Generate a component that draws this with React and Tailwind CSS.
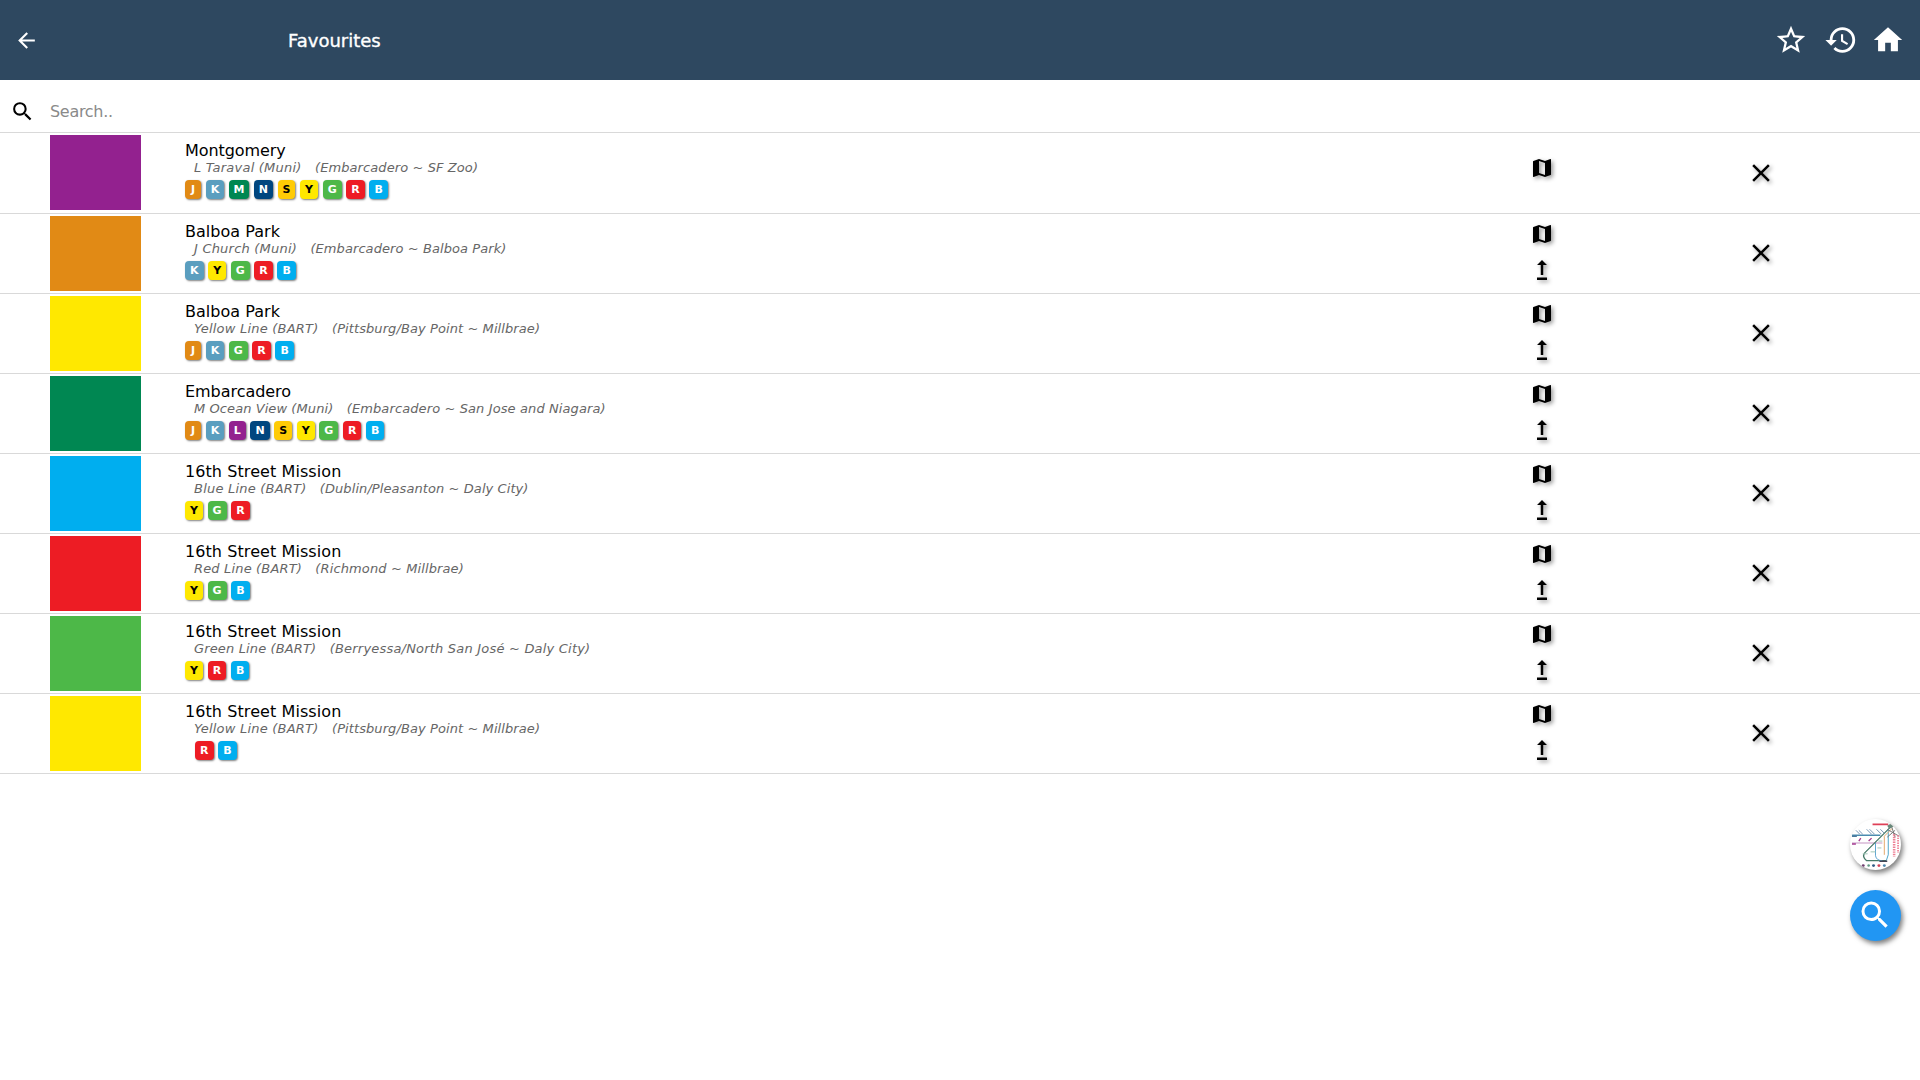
import React from "react";
import { MdArrowBack, MdSearch, MdStarBorder, MdHistory, MdHome, MdMap, MdUpgrade, MdClose } from "react-icons/md";

const BADGES = {
  J: "w-[16.1px] bg-[#e18a15] text-white",
  K: "w-[18.5px] bg-[#5a9ebf] text-white",
  L: "w-[17px] bg-[#93218f] text-white",
  M: "w-[20.4px] bg-[#008752] text-white",
  N: "w-[19.3px] bg-[#00467f] text-white",
  S: "w-[17.8px] bg-[#ffcb05] text-black",
  Y: "w-[18.1px] bg-[#ffe800] text-black",
  G: "w-[18.9px] bg-[#4db848] text-white",
  R: "w-[18.6px] bg-[#ed1c24] text-white",
  B: "w-[18.4px] bg-[#00aeef] text-white",
};

const MISSION = "tracking-[0.08px]";
const BALBOA = "tracking-[0.03px]";

const ROWS = [
  { name: "Montgomery", nameCls: "tracking-[-0.08px]", line: "L Taraval (Muni)", lineCls: "tracking-[0.22px]", route: "(Embarcadero ~ SF Zoo)", routeCls: "tracking-[0.09px]", badges: "JKMNSYGRB", color: "bg-[#93218f]", first: true },
  { name: "Balboa Park", nameCls: BALBOA, line: "J Church (Muni)", lineCls: "tracking-[0.21px]", route: "(Embarcadero ~ Balboa Park)", routeCls: "tracking-[0.08px]", badges: "KYGRB", color: "bg-[#e18a15]" },
  { name: "Balboa Park", nameCls: BALBOA, line: "Yellow Line (BART)", lineCls: "tracking-[0.22px]", route: "(Pittsburg/Bay Point ~ Millbrae)", routeCls: "tracking-[0.09px]", badges: "JKGRB", color: "bg-[#ffe800]" },
  { name: "Embarcadero", nameCls: "tracking-[-0.05px]", line: "M Ocean View (Muni)", lineCls: "tracking-[0.08px]", route: "(Embarcadero ~ San Jose and Niagara)", routeCls: "tracking-[0.11px]", badges: "JKLNSYGRB", color: "bg-[#008752]" },
  { name: "16th Street Mission", nameCls: MISSION, line: "Blue Line (BART)", lineCls: "tracking-[0.21px]", route: "(Dublin/Pleasanton ~ Daly City)", routeCls: "tracking-[0.08px]", badges: "YGR", color: "bg-[#00aeef]" },
  { name: "16th Street Mission", nameCls: MISSION, line: "Red Line (BART)", lineCls: "tracking-[0.16px]", route: "(Richmond ~ Millbrae)", routeCls: "tracking-[0.12px]", badges: "YGB", color: "bg-[#ed1c24]" },
  { name: "16th Street Mission", nameCls: MISSION, line: "Green Line (BART)", lineCls: "tracking-[0.14px]", route: "(Berryessa/North San José ~ Daly City)", routeCls: "tracking-[0.2px]", badges: "YRB", color: "bg-[#4db848]" },
  { name: "16th Street Mission", nameCls: MISSION, line: "Yellow Line (BART)", lineCls: "tracking-[0.22px]", route: "(Pittsburg/Bay Point ~ Millbrae)", routeCls: "tracking-[0.09px]", badges: "RB", color: "bg-[#ffe800]", indent: true },
];

const SHADOW = "drop-shadow-[2px_2px_2px_rgba(0,0,0,0.4)]";

function Badge({ letter }) {
  return (
    <span className={`flex h-[19px] shrink-0 items-center justify-center rounded-[4px] text-[11px] leading-none font-bold shadow-[1px_1px_2px_rgba(0,0,0,0.5)] ${BADGES[letter]}`}>
      {letter}
    </span>
  );
}

function Row({ row }) {
  return (
    <li className={`flex border-b border-[#d9d9d9] ${row.first ? "h-[81px]" : "h-20"}`}>
      <div className={`mt-[2px] ml-[50px] h-[75px] w-[91px] shrink-0 ${row.color}`} />
      <div className="ml-[44px] w-[1345px] shrink-0 pt-2">
        <div className={`h-[19px] text-[16px] leading-[19px] whitespace-nowrap text-black ${row.nameCls}`}>{row.name}</div>
        <div className="flex h-4 gap-[13.4px] pl-[9px] text-[13px] leading-4 whitespace-nowrap text-[#666] italic">
          <span className={row.lineCls}>{row.line}</span>
          <span className={row.routeCls}>{row.route}</span>
        </div>
        <div className={`mt-1 flex gap-[4.6px] ${row.indent ? "pl-[10px]" : ""}`}>
          {row.badges.split("").map((b) => (
            <Badge key={b} letter={b} />
          ))}
        </div>
      </div>
      <div className="flex w-6 shrink-0 flex-col items-center">
        <MdMap className={`shrink-0 ${SHADOW} ${row.first ? "mt-[22.5px]" : "mt-[7.5px]"}`} size={24} />
        {!row.first && <MdUpgrade className={`mt-[9.5px] shrink-0 ${SHADOW}`} size={30} />}
      </div>
      <div className={`ml-[192px] ${row.first ? "pt-[25px]" : "pt-6"}`}>
        <MdClose className={SHADOW} size={30} />
      </div>
    </li>
  );
}

function MiniMap() {
  return (
    <svg viewBox="0 0 52 52" className="h-[52px] w-[52px]" fill="none">
      <g strokeWidth="1">
        <path d="M2 16H31" stroke="#4a8bb0" strokeWidth="1.4" />
        <path d="M2 24H33" stroke="#c596c3" strokeWidth="1.1" />
        <path d="M42 7L15 34Q12 38 17 42H37" stroke="#477a68" strokeWidth="1.3" />
        <path d="M26 24V37Q27 42 33 42" stroke="#5ba4cf" />
        <path d="M37 42L39 36V10" stroke="#4ba3c8" />
        <path d="M35 36V17L43 9" stroke="#e3a86b" />
        <path d="M38 10L50 17M42 6L46 18M38 18L46 11" stroke="#777" />
        <path d="M23 5H39" stroke="#df4058" strokeWidth="1.6" />
        <path d="M45 15V38" stroke="#ee8095" strokeWidth="2.6" strokeDasharray="1.5 1" />
        <path d="M49 16V34" stroke="#ee8095" strokeWidth="1.8" strokeDasharray="1.5 1" />
        <path d="M6 11l4 4M9 11l4 4M17 10l5 5M20 10l5 5M27 10l5 5M31 10l4 4" stroke="#7695b4" />
        <path d="M2 17h5" stroke="#4a7a9c" strokeWidth="1.6" />
        <path d="M9 22l2-3M19 22l3-3M2 25h4" stroke="#a53c91" strokeWidth="1.4" />
        <path d="M13 35h5M21 33h5M29 22h4M28 29h4" stroke="#9fc6b7" />
        <path d="M30 42.5H38" stroke="#445" strokeWidth="1.6" />
        <path d="M39 8l5-3" stroke="#688779" strokeWidth="4" />
      </g>
      <circle cx="13.5" cy="47" r="1.5" fill="#714071" />
      <circle cx="19" cy="47" r="1.3" fill="#5e9b82" />
      <circle cx="24" cy="47" r="1.5" fill="#315c85" />
      <circle cx="29.5" cy="47" r="1.5" fill="#d44258" />
      <circle cx="35" cy="47" r="1.5" fill="#4e88ae" />
    </svg>
  );
}

export default function App() {
  return (
    <div className="min-h-screen bg-white font-['Verdana','DejaVu_Sans',sans-serif]">
      <header className="flex h-20 items-center bg-[#2e4860] text-white">
        <MdArrowBack className="ml-[14px]" size={25} />
        <h1 className="mt-[2px] ml-[249px] text-[18px] leading-6 tracking-[0px] [-webkit-text-stroke:0.35px_white]">Favourites</h1>
        <nav className="ml-auto flex items-center pr-[15px]">
          <MdStarBorder size={34} />
          <MdHistory className="ml-[16px]" size={34} />
          <MdHome className="ml-[13px]" size={34} />
        </nav>
      </header>
      <div className="flex h-[53px] items-center border-b border-[#d9d9d9] pt-[11px]">
        <MdSearch className="ml-[10px]" size={25} />
        <input className="ml-[15px] w-96 text-[16px] tracking-[-0.3px] outline-none placeholder:text-[#8a8a8a]" placeholder="Search.." />
      </div>
      <ul>
        {ROWS.map((row, i) => (
          <Row key={i} row={row} />
        ))}
      </ul>
      <div className="fixed top-[819px] right-[19px] flex flex-col gap-5">
        <button className="flex h-[51px] w-[51px] items-center justify-center overflow-hidden rounded-full bg-white shadow-[2px_3px_5px_rgba(0,0,0,0.5)]">
          <MiniMap />
        </button>
        <button className="flex h-[51px] w-[51px] items-center justify-center rounded-full bg-[#2196f3] pr-[2px] pb-px text-white shadow-[2px_3px_5px_rgba(0,0,0,0.5)]">
          <MdSearch size={36} />
        </button>
      </div>
    </div>
  );
}
